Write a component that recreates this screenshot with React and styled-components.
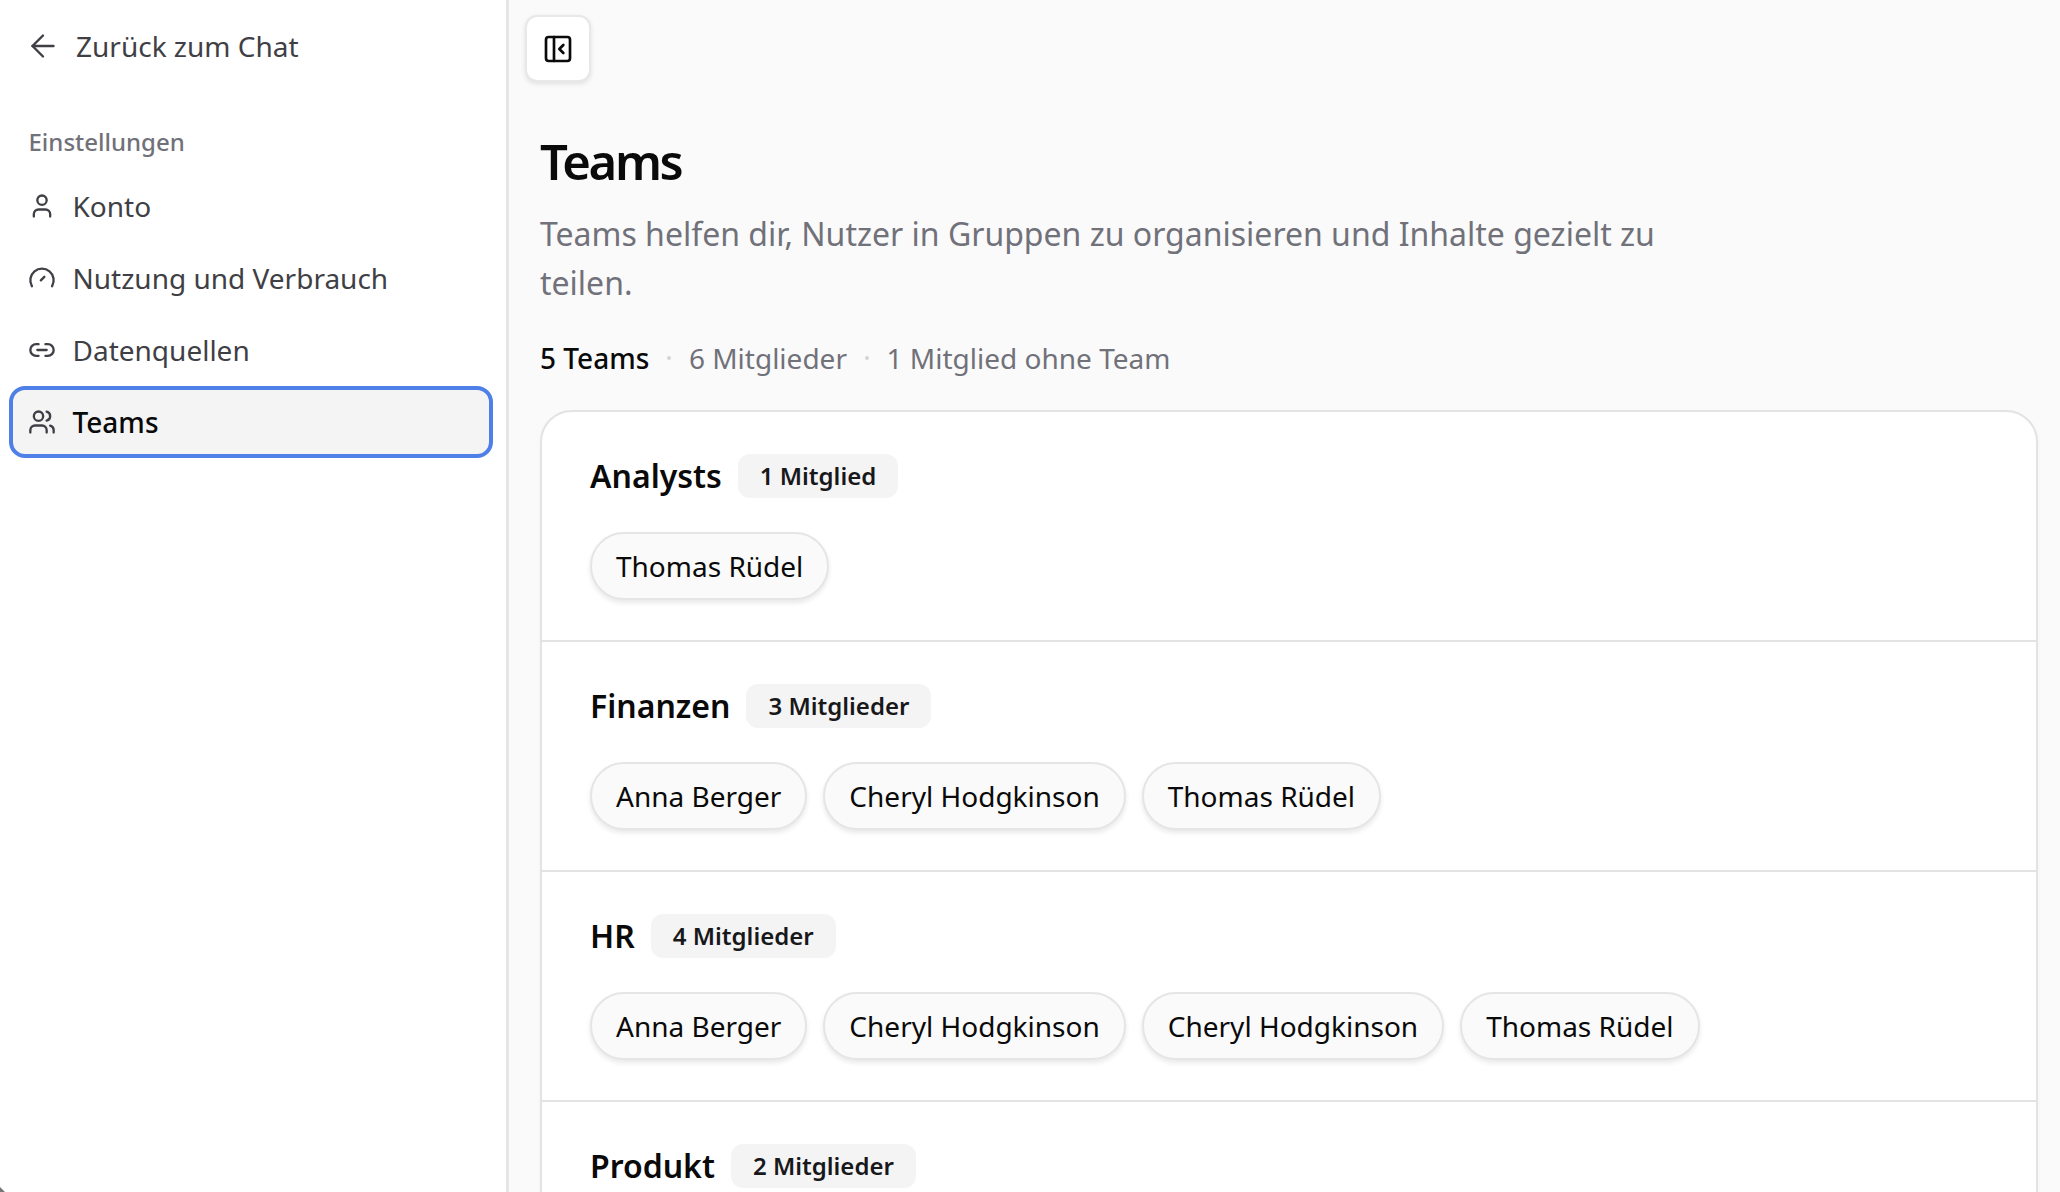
import React from 'react'
import styled, { createGlobalStyle } from 'styled-components'
import { ArrowLeft, User, Link2, Users, PanelLeftClose } from 'lucide-react'

const GlobalStyle = createGlobalStyle`
  * { box-sizing: border-box; }
  html, body { margin: 0; height: 100%; background: #fafafa; }
  body { font-family: "Noto Sans", sans-serif; color: #0a0a0a; overflow: hidden; }
`

const teams = [
  { name: 'Analysts', count: '1 Mitglied', members: ['Thomas Rüdel'] },
  { name: 'Finanzen', count: '3 Mitglieder', members: ['Anna Berger', 'Cheryl Hodgkinson', 'Thomas Rüdel'] },
  { name: 'HR', count: '4 Mitglieder', members: ['Anna Berger', 'Cheryl Hodgkinson', 'Cheryl Hodgkinson', 'Thomas Rüdel'] },
  { name: 'Produkt', count: '2 Mitglieder', members: [] },
]

function GaugeIcon() {
  return (
    <svg width="28" height="28" viewBox="0 0 24 24" fill="none" stroke="currentColor" strokeWidth="2" strokeLinecap="round" strokeLinejoin="round">
      <path d="M3.34 19a10 10 0 1 1 17.32 0" />
      <path d="m11 14 3-3" />
    </svg>
  )
}

export default function App() {
  return (
    <>
      <GlobalStyle />
      <Page>
        <Sidebar>
          <BackLink>
            <ArrowLeft size={36} strokeWidth={1.6} />
            Zurück zum Chat
          </BackLink>
          <SectionLabel>Einstellungen</SectionLabel>
          <Nav>
            <NavItem><User size={28} />Konto</NavItem>
            <NavItem><GaugeIcon />Nutzung und Verbrauch</NavItem>
            <NavItem><Link2 size={28} />Datenquellen</NavItem>
            <NavItem $active><Users size={28} />Teams</NavItem>
          </Nav>
        </Sidebar>
        <Main>
          <ToggleButton>
            <PanelLeftClose size={32} strokeWidth={2} />
          </ToggleButton>
          <Content>
            <Title>Teams</Title>
            <Intro>Teams helfen dir, Nutzer in Gruppen zu organisieren und Inhalte gezielt zu teilen.</Intro>
            <Stats>
              <StatStrong>5 Teams</StatStrong>
              <Dot />
              <span>6 Mitglieder</span>
              <Dot />
              <span>1 Mitglied ohne Team</span>
            </Stats>
            <Card>
              {teams.map((team) => (
                <TeamRow key={team.name}>
                  <TeamHead>
                    <TeamName>{team.name}</TeamName>
                    <CountBadge>{team.count}</CountBadge>
                  </TeamHead>
                  <Chips>
                    {team.members.map((member, index) => (
                      <Chip key={index}>{member}</Chip>
                    ))}
                  </Chips>
                </TeamRow>
              ))}
            </Card>
          </Content>
        </Main>
        <WindowCorner />
      </Page>
    </>
  )
}

const Page = styled.div`
  display: flex;
  height: 100vh;
  overflow: hidden;
  position: relative;
`
const Sidebar = styled.aside`
  width: 509px;
  flex-shrink: 0;
  background: #fff;
  border-right: 3px solid #e5e5e5;
  padding: 0 13px 0 8.5px;
`
const BackLink = styled.a`
  display: flex;
  align-items: center;
  gap: 15px;
  height: 91px;
  padding-left: 16.5px;
  font-size: 28px;
  color: #3f3f46;
  svg { flex-shrink: 0; }
`
const SectionLabel = styled.div`
  margin-top: 33px;
  padding-left: 20px;
  font-size: 24px;
  line-height: 36px;
  font-weight: 500;
  color: #71717a;
`
const Nav = styled.nav`
  display: flex;
  flex-direction: column;
  margin-top: 10px;
`
const NavItem = styled.a`
  display: flex;
  align-items: center;
  gap: 16.5px;
  height: 72px;
  padding-left: ${(p) => (p.$active ? '15.5px' : '19.5px')};
  border-radius: 16px;
  font-size: 28px;
  font-weight: ${(p) => (p.$active ? 500 : 400)};
  color: ${(p) => (p.$active ? '#0a0a0a' : '#3f3f46')};
  background: ${(p) => (p.$active ? '#f4f4f5' : 'transparent')};
  border: ${(p) => (p.$active ? '4px solid #4f80e8' : 'none')};
  svg { flex-shrink: 0; color: #3f3f46; }
`
const Main = styled.main`
  flex: 1;
  min-width: 0;
  padding: 15px 22px 0 16px;
`
const ToggleButton = styled.button`
  display: flex;
  align-items: center;
  justify-content: center;
  width: 66px;
  height: 67px;
  padding: 0;
  background: #fff;
  border: 2px solid #e8e8e8;
  border-radius: 12px;
  box-shadow: 0 2px 5px rgba(0, 0, 0, 0.1);
  color: #0a0a0a;
`
const Content = styled.div`
  padding-left: 15px;
`
const Title = styled.h1`
  margin: 47px 0 0;
  font-size: 49px;
  line-height: 64px;
  font-weight: 600;
  letter-spacing: -2.3px;
  color: #0a0a0a;
`
const Intro = styled.p`
  margin: 17px 0 0;
  max-width: 1180px;
  font-size: 32px;
  line-height: 48.5px;
  color: #71717a;
`
const Stats = styled.div`
  display: flex;
  align-items: center;
  gap: 17.8px;
  margin-top: 30.5px;
  font-size: 28px;
  line-height: 40px;
  color: #71717a;
`
const StatStrong = styled.span`
  font-weight: 500;
  color: #0a0a0a;
`
const Dot = styled.i`
  width: 4px;
  height: 4px;
  border-radius: 50%;
  background: #d4d4d8;
`
const Card = styled.section`
  margin-top: 32px;
  background: #fff;
  border: 2px solid #e3e3e3;
  border-radius: 32px;
  box-shadow: 0 2px 4px rgba(0, 0, 0, 0.03);
`
const TeamRow = styled.div`
  padding: 42px 47.5px 40px 48px;
  height: 230px;
  border-bottom: 2px solid #e3e3e3;
`
const TeamHead = styled.div`
  display: flex;
  align-items: center;
  gap: 16px;
  height: 44px;
`
const TeamName = styled.h2`
  margin: 0;
  font-size: 32px;
  font-weight: 600;
  color: #0a0a0a;
`
const CountBadge = styled.span`
  display: flex;
  align-items: center;
  height: 44px;
  padding: 0 22px;
  border-radius: 12px;
  background: #f4f4f5;
  font-size: 24px;
  font-weight: 600;
  color: #18181b;
`
const Chips = styled.div`
  display: flex;
  gap: 16px;
  margin-top: 34px;
`
const Chip = styled.span`
  display: flex;
  align-items: center;
  height: 68px;
  padding: 0 24px;
  border-radius: 34px;
  background: #fafafa;
  border: 2px solid #e5e5e5;
  box-shadow: 0 3px 5px rgba(0, 0, 0, 0.09);
  font-size: 28px;
  color: #0a0a0a;
`
const WindowCorner = styled.div`
  position: absolute;
  left: 0;
  bottom: 0;
  width: 5px;
  height: 5px;
  background: #777;
  clip-path: polygon(0 0, 100% 100%, 0 100%);
`
